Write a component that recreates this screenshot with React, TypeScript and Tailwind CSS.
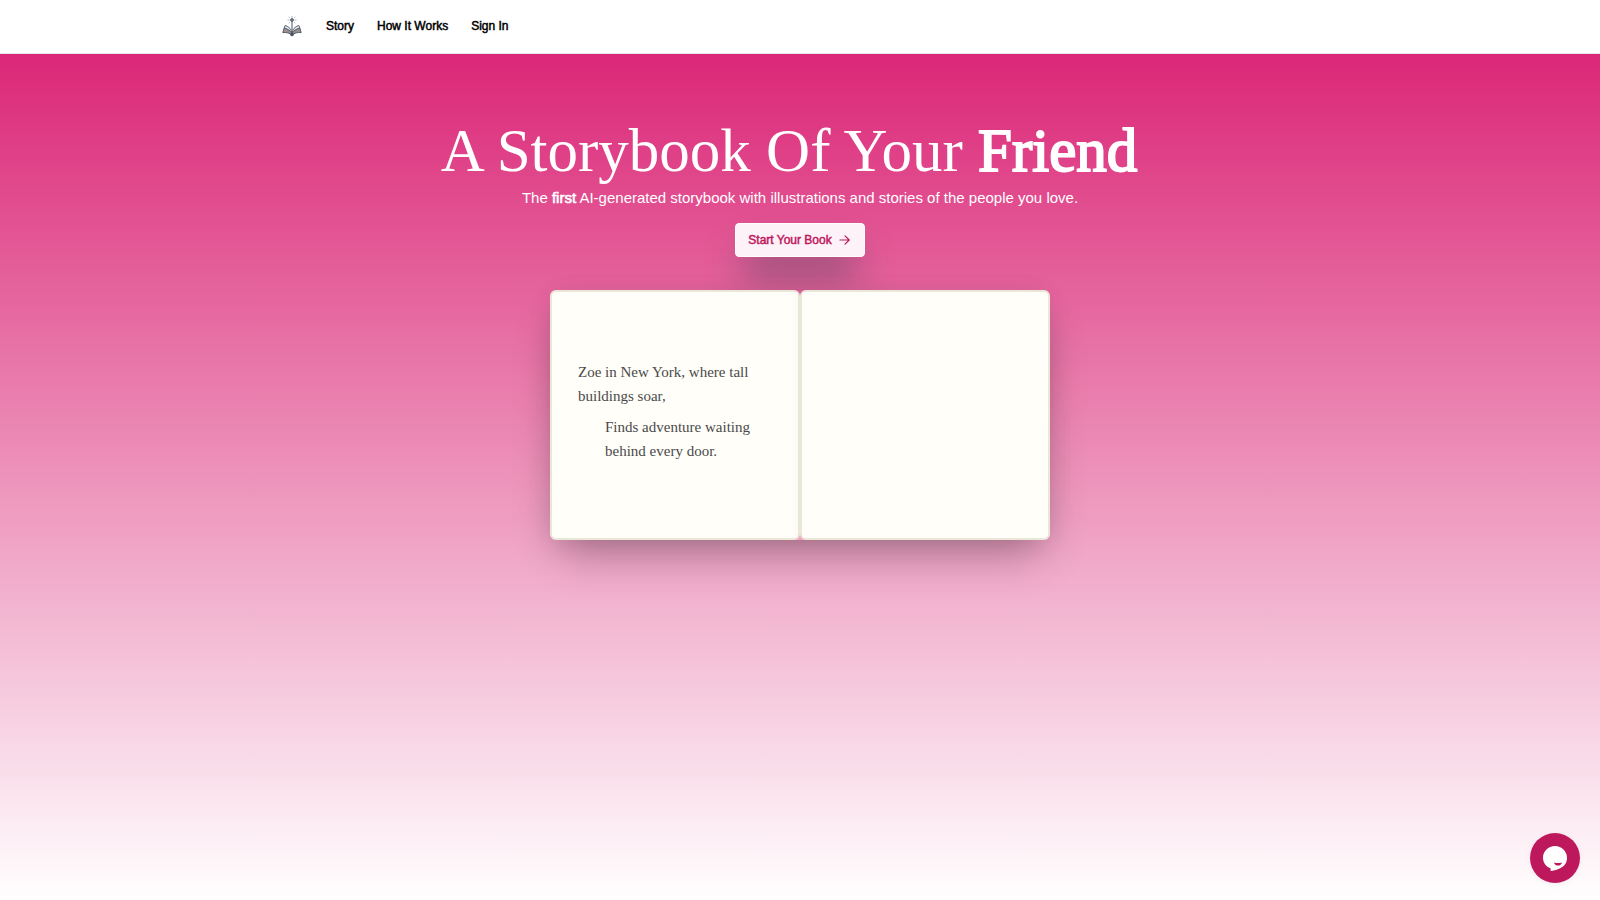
const navLinks = ["Story", "How It Works", "Sign In"];

function Logo() {
  return (
    <svg viewBox="0 0 20 22" className="h-[22px] w-5" fill="none" stroke="#4b5563" aria-hidden="true">
      <path d="M10 5v10" stroke="#475569" strokeWidth="1" />
      <circle cx="10" cy="5" r="1.4" fill="#7c8794" strokeWidth="0.9" />
      <path d="M10 1v1.800M5.500 5h2M12.500 5h2M6.700 1.700l1.200 1.200M13.300 1.700l-1.200 1.200M6.700 8.300l1.200-1.200M13.300 8.300l-1.200-1.200" stroke="#8d99a6" strokeWidth="0.7" />
      <path d="M10 17.500C8 15.500 5.500 13.800 2.200 12.800L0.800 17.600C4.500 17.200 7.600 18 10 20C12.400 18 15.500 17.200 19.200 17.600L17.800 12.800C14.500 13.800 12 15.500 10 17.500Z" fill="#9a8f8d" strokeWidth="0.9" />
      <path d="M10 17.500C9.500 14.500 7.200 11.800 3.200 10.400L2.200 12.800C5.500 13.800 8 15.500 10 17.500ZM10 17.500C10.500 14.500 12.800 11.800 16.800 10.400L17.800 12.800C14.500 13.800 12 15.500 10 17.500Z" fill="#e8ecf0" strokeWidth="0.9" />
      <circle cx="10" cy="19.400" r="1.600" fill="#475569" strokeWidth="0.5" />
    </svg>
  );
}

function Header() {
  return (
    <header className="border-b border-gray-200 bg-white">
      <nav className="mx-auto flex h-[53px] max-w-[1036px] items-center gap-[23px] pb-0.5 text-xs text-black" aria-label="Main">
        <a href="#home" aria-label="Home" className="pr-px">
          <Logo />
        </a>
        {navLinks.map((label) => (
          <a key={label} href="#" className="[-webkit-text-stroke:0.04em]">
            {label}
          </a>
        ))}
      </nav>
    </header>
  );
}

function Book() {
  return (
    <div className="mt-[33px] flex rounded-md shadow-[0_22px_42px_-10px_rgba(0,0,0,0.3),0_4px_28px_-6px_rgba(0,0,0,0.12)]">
      <article className="flex size-[250px] flex-col justify-center gap-[7px] rounded-md border-2 border-[#ebe7d8] bg-[#fffef9] px-[26px] pb-2 font-['Liberation_Serif',serif] text-[15px] leading-6 text-[#4a4a4a] shadow-[inset_-7px_0_10px_-7px_rgba(0,0,0,0.04)]">
        <p>Zoe in New York, where tall buildings soar,</p>
        <p className="pl-[27px]">Finds adventure waiting behind every door.</p>
      </article>
      <div className="size-[250px] rounded-md border-2 border-[#ebe7d8] bg-[#fffef9]" />
    </div>
  );
}

export default function App() {
  return (
    <div className="flex min-h-screen flex-col bg-white font-['Liberation_Sans',sans-serif]">
      <Header />
      <main className="flex flex-1 flex-col items-center bg-[linear-gradient(to_bottom,#db2777,#ffffff)] px-4 pt-[65px] text-white">
        <h1 className="pr-[22px] font-['Liberation_Serif',serif] text-[61px] leading-[64px]">
          A Storybook Of Your <span className="[-webkit-text-stroke:0.032em]">Friend</span>
        </h1>
        <p className="mt-[3px] text-[15px] leading-6">
          The <span className="[-webkit-text-stroke:0.04em]">first</span> AI-generated storybook with illustrations and
          stories of the people you love.
        </p>
        <button
          type="button"
          className="mt-[13px] flex h-[34px] items-center gap-1.5 rounded border border-white bg-pink-50 px-3 text-xs text-[#be185d] shadow-[0_24px_36px_-8px_rgba(55,65,81,0.75)]"
        >
          <span className="[-webkit-text-stroke:0.04em]">Start Your Book</span>
          <svg viewBox="0 0 14 14" className="size-3.5" fill="none" stroke="currentColor" strokeWidth="1.200" strokeLinecap="round" strokeLinejoin="round" aria-hidden="true">
            <path d="M2 7h9M7 2.800L11.200 7L7 11.200" />
          </svg>
        </button>
        <Book />
      </main>
      <button
        type="button"
        aria-label="Open chat"
        className="fixed right-5 bottom-[17px] flex size-[50px] items-center justify-center rounded-full bg-[#be185d] shadow-[0_1px_6px_rgba(0,0,0,0.06)]"
      >
        <svg viewBox="0 0 26 26" className="size-[26px]" aria-hidden="true">
          <path d="M13 1C6.300 1 1 6.200 1 12.700C1 17.600 4 21.600 8.500 23.300L8.700 26C14 25.300 19.500 23.600 22.500 20C24.200 17.900 25 15.500 25 12.700C25 6.200 19.700 1 13 1Z" fill="#fff" />
          <path d="M12 17.400C14.500 18.200 17.500 18.200 20 17.400C19.600 19.400 18 20.500 16 20.500S12.400 19.400 12 17.400Z" fill="#be185d" />
        </svg>
      </button>
    </div>
  );
}
